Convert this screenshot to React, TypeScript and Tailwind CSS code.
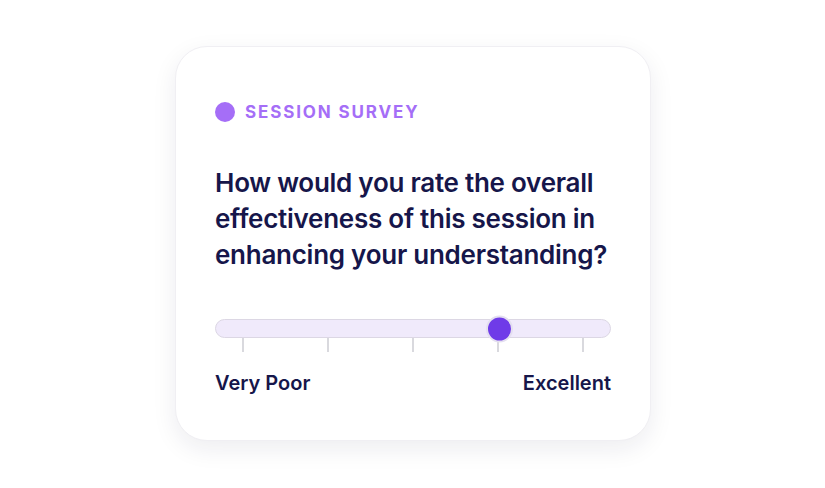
export default function App() {
  const ticks = [0, 1, 2, 3, 4];
  return (
    <div
      className="w-[825px] h-[488px] bg-white flex items-start justify-center pt-[46px]"
      style={{ fontFamily: "Inter, 'Noto Sans', sans-serif" }}
    >
      <div className="w-[476px] h-[395px] ml-[1px] bg-white rounded-[32px] border border-[#f0eff3] shadow-[0_8px_24px_rgba(30,20,60,0.08)] px-[39px] pt-[55px]">
        <div className="flex items-center gap-[10px]">
          <span className="w-[20px] h-[20px] rounded-full bg-[#a56ef7]" />
          <span className="text-[17px] font-bold tracking-[0.11em] text-[#a56ef7] leading-none">
            SESSION SURVEY
          </span>
        </div>

        <p className="mt-[43px] text-[26px] font-semibold leading-[36px] tracking-[-0.01em] text-[#16164a]">
          How would you rate the overall effectiveness of this session in enhancing your understanding?
        </p>

        <div className="mt-[46px]">
          <div className="relative h-[19px] rounded-full bg-[#f0eafb] border border-[#dcd7e4]">
            <span className="absolute left-[270px] top-1/2 -translate-y-1/2 w-[27px] h-[27px] rounded-full bg-[#6f3be8] border-2 border-[#e4dff0]" />
          </div>
          <div className="flex justify-between px-[27px]">
            {ticks.map((t) => (
              <span key={t} className="w-[2px] h-[14px] bg-[#d9d9de]" />
            ))}
          </div>
        </div>

        <div className="mt-[17px] flex justify-between text-[20px] leading-[28px] font-semibold text-[#16164a]">
          <span>Very Poor</span>
          <span>Excellent</span>
        </div>
      </div>
    </div>
  );
}
